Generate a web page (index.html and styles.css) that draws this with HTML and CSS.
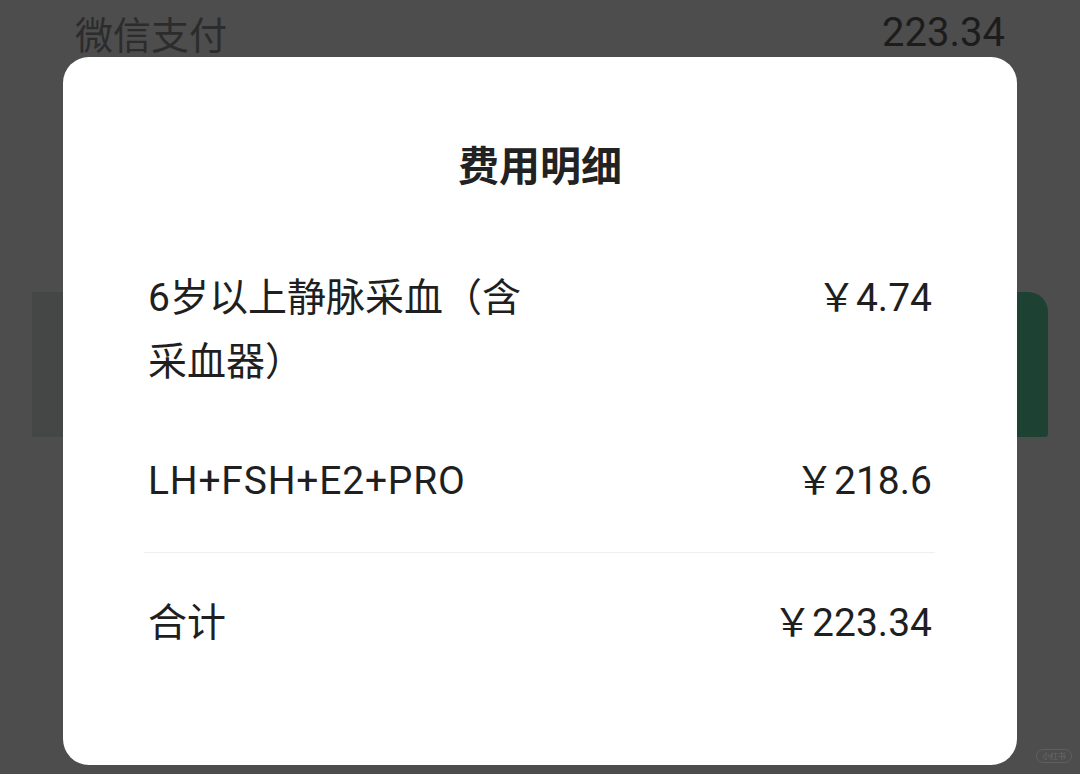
FILE: index.html
```html
<!DOCTYPE html>
<html lang="zh-CN">
<head>
<meta charset="utf-8">
<title>费用明细</title>
<link rel="stylesheet" href="styles.css">
</head>
<body>
<div class="page">
  <div class="pay-row">
    <span class="pay-label">微信支付</span>
    <span class="pay-amount">223.34</span>
  </div>
  <div class="action-row">
    <div class="action-card"></div>
    <div class="action-btn"></div>
  </div>
</div>

<div class="modal">
  <h1 class="modal-title">费用明细</h1>
  <div class="items">
    <div class="item">
      <div class="item-name">6岁以上静脉采血（含采血器）</div>
      <div class="item-price">￥4.74</div>
    </div>
    <div class="item">
      <div class="item-name latin">LH+FSH+E2+PRO</div>
      <div class="item-price">￥218.6</div>
    </div>
  </div>
  <div class="divider"></div>
  <div class="item total">
    <div class="item-name">合计</div>
    <div class="item-price">￥223.34</div>
  </div>
</div>

<div class="watermark">小红书</div>
</body>
</html>
```

FILE: styles.css
```css
html, body {
  margin: 0;
  padding: 0;
}
body {
  width: 1080px;
  height: 774px;
  overflow: hidden;
  background: #4d4d4d;
  font-family: Roboto, "Noto Sans CJK SC", sans-serif;
  position: relative;
}
.page {
  display: flex;
  flex-direction: column;
}
.pay-row {
  display: flex;
  justify-content: space-between;
  align-items: center;
  padding: 7px 75px 0 75px;
  height: 50px;
}
.pay-label {
  font-size: 38px;
  color: #2c2c2c;
}
.pay-amount {
  font-size: 40px;
  color: #1c1c1c;
}
.action-row {
  display: flex;
  margin-top: 235px;
  padding: 0 32px;
  height: 145px;
}
.action-card {
  flex: 1;
  background: #444745;
}
.action-btn {
  width: 220px;
  background: #1d4233;
  border-radius: 0 20px 3px 0;
}
.modal {
  position: absolute;
  left: 63px;
  top: 57px;
  width: 954px;
  height: 708px;
  box-sizing: border-box;
  background: #ffffff;
  border-radius: 26px;
  padding: 82px 85px 0 85px;
  color: #1f1f1f;
}
.modal-title {
  margin: 0;
  text-align: center;
  font-size: 41px;
  line-height: 56px;
  font-weight: 700;
  color: #222222;
}
.items {
  display: flex;
  flex-direction: column;
  gap: 55px;
  margin-top: 71px;
}
.item {
  display: flex;
  justify-content: space-between;
  align-items: flex-start;
  font-size: 39px;
  line-height: 64px;
}
.item-name {
  max-width: 390px;
}
.latin {
  letter-spacing: 0.8px;
}
.item-price {
  white-space: nowrap;
  text-align: right;
}
.divider {
  height: 1px;
  background: #efefef;
  margin: 39px -3px 38px -4px;
}
.watermark {
  position: absolute;
  right: 8px;
  bottom: 11px;
  font-size: 8px;
  line-height: 10px;
  padding: 1px 5px;
  color: #6a6a6a;
  border: 1px solid #5f5f5f;
  border-radius: 7px;
  font-family: "Noto Sans CJK SC", sans-serif;
}
```
